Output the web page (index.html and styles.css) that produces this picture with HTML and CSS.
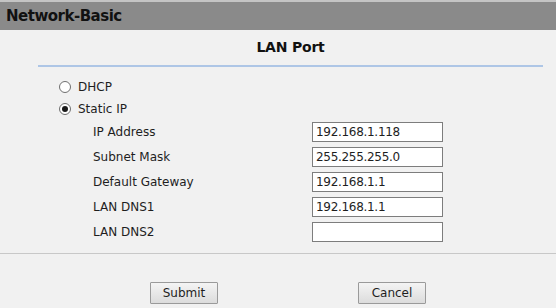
FILE: index.html
```html
<!DOCTYPE html>
<html lang="en">
<head>
  <meta charset="UTF-8" />
  <title>Network-Basic</title>
  <link rel="stylesheet" href="styles.css">
</head>
<body>
  <div class="page-title">Network-Basic</div>

  <div class="panel">
    <h2 class="panel-title">LAN Port</h2>

    <div class="mode-list">
      <label class="mode">
        <input type="radio" name="mode" value="dhcp">
        <span>DHCP</span>
      </label>
      <label class="mode">
        <input type="radio" name="mode" value="static" checked>
        <span>Static IP</span>
      </label>
    </div>

    <div class="fields">
      <div class="field">
        <label for="ipAddress">IP Address</label>
        <input id="ipAddress" type="text" value="192.168.1.118">
      </div>
      <div class="field">
        <label for="subnetMask">Subnet Mask</label>
        <input id="subnetMask" type="text" value="255.255.255.0">
      </div>
      <div class="field">
        <label for="gateway">Default Gateway</label>
        <input id="gateway" type="text" value="192.168.1.1">
      </div>
      <div class="field">
        <label for="dns1">LAN DNS1</label>
        <input id="dns1" type="text" value="192.168.1.1">
      </div>
      <div class="field">
        <label for="dns2">LAN DNS2</label>
        <input id="dns2" type="text" value="">
      </div>
    </div>
  </div>

  <div class="actions">
    <button type="button">Submit</button>
    <button type="button">Cancel</button>
  </div>
</body>
</html>
```

FILE: styles.css
```css
body {
  margin: 0;
  font-family: 'DejaVu Sans', Verdana, sans-serif;
  font-size: 12px;
  color: #1e1e1e;
  background: #f1f1f1;
  height: 308px;
  overflow: hidden;
}

.page-title {
  border-top: 2px solid #c4c4c4;
  background: #8a8a8a;
  height: 28px;
  line-height: 28px;
  padding-left: 6px;
  font-size: 15px;
  font-weight: bold;
  letter-spacing: -0.5px;
  color: #111;
}

.panel {
  padding-bottom: 11px;
  border-bottom: 1px solid #c8c8c8;
}

.panel-title {
  margin: 0 13px 0 38px;
  padding: 7px 0 8px;
  line-height: 20px;
  font-size: 14px;
  font-weight: bold;
  letter-spacing: -0.2px;
  text-align: center;
  color: #111;
  border-bottom: 2px solid #aec6e6;
}

.mode-list {
  margin-top: 9px;
  padding-left: 59px;
}

.mode {
  display: flex;
  align-items: center;
  gap: 7px;
  height: 22px;
}

.mode input {
  appearance: none;
  margin: 0;
  width: 12px;
  height: 12px;
  border: 1px solid #6f6f6f;
  border-radius: 50%;
  background: #fff;
  display: grid;
  place-items: center;
}

.mode input:checked::after {
  content: "";
  width: 6px;
  height: 6px;
  border-radius: 50%;
  background: #1a1a1a;
}

.fields {
  margin-top: 2px;
  display: flex;
  flex-direction: column;
  gap: 5px;
}

.field {
  display: grid;
  grid-template-columns: 219px 131px;
  padding-left: 93px;
  align-items: center;
  height: 20px;
}

.field input {
  box-sizing: border-box;
  width: 131px;
  height: 20px;
  margin: 0;
  padding: 0 3px;
  border: 1px solid #7d7d7d;
  background: #fff;
  font-family: 'DejaVu Sans', Verdana, sans-serif;
  font-size: 12px;
  letter-spacing: -0.3px;
  color: #1e1e1e;
}

.actions {
  display: flex;
  justify-content: center;
  gap: 140px;
  padding-left: 20px;
  margin-top: 28px;
}

.actions button {
  width: 68px;
  height: 22px;
  padding: 0;
  border: 1px solid #9a9a9a;
  border-radius: 1px;
  background: linear-gradient(#f4f4f4, #dcdcdc);
  font-family: 'DejaVu Sans', Verdana, sans-serif;
  font-size: 12px;
  color: #1e1e1e;
}
```
